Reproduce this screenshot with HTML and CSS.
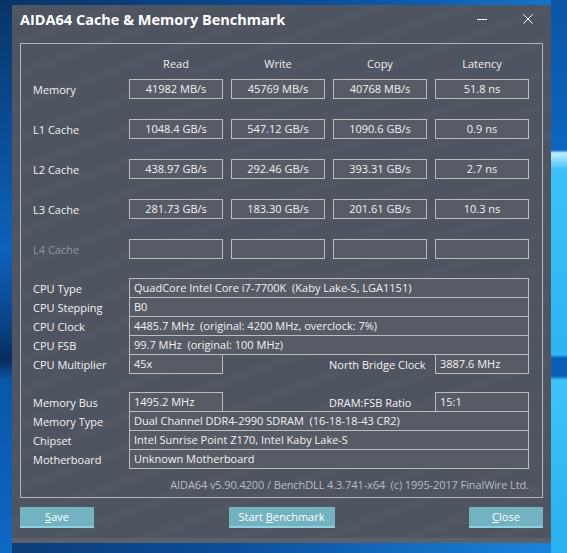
FILE: index.html
```html
<!DOCTYPE html>
<html>
<head>
<meta charset="utf-8">
<link rel="stylesheet" href="styles.css">
</head>
<body>
<div class="window">
  <div class="titlebar">
    <div class="title">AIDA64 Cache &amp; Memory Benchmark</div>
    <div class="controls">
      <div class="ctl"><svg width="10" height="10" viewBox="0 0 10 10"><path d="M0 5.5H10" stroke="#ffffff" stroke-width="1"/></svg></div>
      <div class="ctl"><svg width="10" height="10" viewBox="0 0 10 10"><path d="M0.5 0.5L9.5 9.5M9.5 0.5L0.5 9.5" stroke="#ffffff" stroke-width="1"/></svg></div>
    </div>
  </div>
  <div class="group">
    <div class="brow bhead"><span></span><span class="hd">Read</span><span class="hd">Write</span><span class="hd">Copy</span><span class="hd">Latency</span></div>
    <div class="brow"><span class="lbl">Memory</span><span class="box">41982 MB/s</span><span class="box">45769 MB/s</span><span class="box">40768 MB/s</span><span class="box">51.8 ns</span></div>
    <div class="brow"><span class="lbl">L1 Cache</span><span class="box">1048.4 GB/s</span><span class="box">547.12 GB/s</span><span class="box">1090.6 GB/s</span><span class="box">0.9 ns</span></div>
    <div class="brow"><span class="lbl">L2 Cache</span><span class="box">438.97 GB/s</span><span class="box">292.46 GB/s</span><span class="box">393.31 GB/s</span><span class="box">2.7 ns</span></div>
    <div class="brow"><span class="lbl">L3 Cache</span><span class="box">281.73 GB/s</span><span class="box">183.30 GB/s</span><span class="box">201.61 GB/s</span><span class="box">10.3 ns</span></div>
    <div class="brow"><span class="lbl dim">L4 Cache</span><span class="box"></span><span class="box"></span><span class="box"></span><span class="box"></span></div>

    <div class="info">
      <div class="irow"><span class="lbl">CPU Type</span><span class="vbox">QuadCore Intel Core i7-7700K  (Kaby Lake-S, LGA1151)</span></div>
      <div class="irow"><span class="lbl">CPU Stepping</span><span class="vbox">B0</span></div>
      <div class="irow"><span class="lbl">CPU Clock</span><span class="vbox">4485.7 MHz  (original: 4200 MHz, overclock: 7%)</span></div>
      <div class="irow"><span class="lbl">CPU FSB</span><span class="vbox">99.7 MHz  (original: 100 MHz)</span></div>
      <div class="irow split"><span class="lbl">CPU Multiplier</span><span class="vbox">45x</span><span></span><span class="lbl">North Bridge Clock</span><span class="vbox">3887.6 MHz</span></div>
      <div class="irow split gap"><span class="lbl">Memory Bus</span><span class="vbox">1495.2 MHz</span><span></span><span class="lbl">DRAM:FSB Ratio</span><span class="vbox">15:1</span></div>
      <div class="irow"><span class="lbl">Memory Type</span><span class="vbox">Dual Channel DDR4-2990 SDRAM  (16-18-18-43 CR2)</span></div>
      <div class="irow"><span class="lbl">Chipset</span><span class="vbox">Intel Sunrise Point Z170, Intel Kaby Lake-S</span></div>
      <div class="irow"><span class="lbl">Motherboard</span><span class="vbox">Unknown Motherboard</span></div>
    </div>
    <div class="version">AIDA64 v5.90.4200 / BenchDLL 4.3.741-x64  (c) 1995-2017 FinalWire Ltd.</div>
  </div>
  <div class="buttons">
    <div class="btn btn-side"><u>S</u>ave</div>
    <div class="btn btn-mid">Start <u>B</u>enchmark</div>
    <div class="btn btn-side"><u>C</u>lose</div>
  </div>
</div>
</body>
</html>
```

FILE: styles.css
```css
* { box-sizing: border-box; }

html, body { margin: 0; }

body {
  width: 567px;
  height: 553px;
  overflow: hidden;
  padding: 5px 0 0 12px;
  font-family: "Open Sans", "Noto Sans", sans-serif;
  font-size: 11px;
  color: #f2f2f2;
  background:
    linear-gradient(to bottom, #0a55a6 0px, #0c66c0 150px, #bfeeff 153px, #3cc0f8 170px, #2fb4f4 355px, #0a5fb8 358px, #0a5fb8 376px, #3ec2f8 380px, #2ab0f0 553px) right top / 16px 100% no-repeat,
    linear-gradient(to bottom, #0a3466 0px, #0b4a92 120px, #0d62bb 250px, #0a3f80 332px, #072d5c 360px, #0b56a8 380px, #0d68c4 553px) left top / 12px 100% no-repeat,
    linear-gradient(100deg, #0a3466 0%, #0b4f9c 50%, #1a86e0 100%);
}

.window {
  width: 539px;
  height: 538px;
  display: flex;
  flex-direction: column;
  background-color: #4e5460;
  background-image: repeating-linear-gradient(160deg, rgba(255,255,255,0) 0px, rgba(255,255,255,0.018) 6px, rgba(255,255,255,0) 14px, rgba(255,255,255,0) 30px);
  border-bottom: 5px solid #5a616d;
}

.titlebar {
  height: 38px;
  display: flex;
  justify-content: space-between;
  align-items: flex-start;
  flex: none;
}

.title {
  padding-left: 8px;
  font-weight: 700;
  font-size: 14.5px;
  line-height: 30px;
  color: #ffffff;
}

.controls { display: flex; }

.ctl {
  width: 46px;
  height: 28px;
  display: flex;
  align-items: center;
  justify-content: center;
}

.ctl svg { display: block; }

.group {
  margin: 0 8px;
  height: 455px;
  flex: none;
  border: 1px solid #b3b6bc;
  padding: 12px 0 0 12px;
}

.brow {
  display: grid;
  grid-template-columns: 88px repeat(4, 94px);
  column-gap: 8px;
  height: 20px;
  align-items: center;
  margin-top: 20px;
}

.bhead {
  height: 16px;
  margin-top: 0;
  line-height: 16px;
}

.bhead + .brow { margin-top: 7px; }

.hd { text-align: center; color: #eeeeee; }

.lbl { white-space: nowrap; color: #f2f2f2; }
.lbl.dim { color: #8a9c98; }

.box {
  height: 20px;
  border: 1px solid #bcbcbc;
  background: #565b66;
  text-align: center;
  line-height: 18px;
  white-space: pre;
}

.info { margin-top: 19px; }

.irow {
  display: grid;
  grid-template-columns: 96px 400px;
  height: 20px;
  align-items: center;
}

.irow + .irow { margin-top: -1px; }
.irow.split { grid-template-columns: 96px 94px 106px 106px 94px; }
.irow.gap { margin-top: 18px; }

.vbox {
  height: 20px;
  border: 1px solid #bcbcbc;
  background: #565b66;
  padding-left: 4px;
  line-height: 18px;
  white-space: pre;
  overflow: hidden;
}

.version {
  margin-top: 8px;
  padding-right: 13px;
  text-align: right;
  line-height: 16px;
  color: #b9bdc4;
  white-space: pre;
  letter-spacing: -0.1px;
}

.buttons {
  display: flex;
  justify-content: space-between;
  margin: 9px 8px 0;
  flex: none;
}

.btn {
  height: 21px;
  background: #73b2c0;
  border-bottom: 2px solid #8dd1da;
  color: #ffffff;
  text-align: center;
  line-height: 19px;
  font-size: 11px;
}

.btn-side { width: 74px; }
.btn-mid { width: 106px; }
```
